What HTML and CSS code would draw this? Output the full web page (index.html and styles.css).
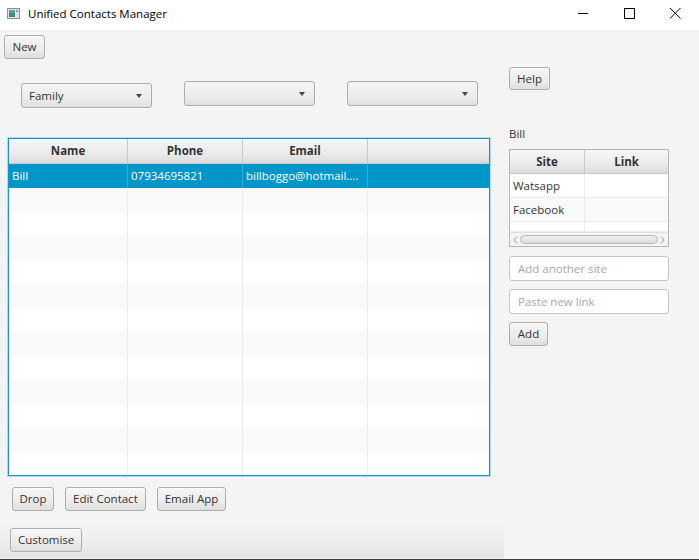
FILE: index.html
```html
<!DOCTYPE html>
<html>
<head>
<meta charset="utf-8">
<title>Unified Contacts Manager</title>
<link rel="stylesheet" href="styles.css">
</head>
<body>
<div class="window">
  <div class="titlebar">
    <svg class="app-icon" width="13" height="11" viewBox="0 0 13 11">
      <rect x="0.5" y="0.5" width="12" height="10" fill="#dfe3e6" stroke="#8a9199"/>
      <rect x="2" y="2" width="6" height="7" fill="#3f8f7f"/>
      <rect x="2" y="2" width="6" height="3" fill="#5aa595"/>
      <rect x="9" y="2" width="2" height="2" fill="#7c98b0"/>
    </svg>
    <span class="title">Unified Contacts Manager</span>
    <div class="controls">
      <svg class="ctl" width="46" height="30" viewBox="0 0 46 30"><line x1="18" y1="13.5" x2="28" y2="13.5" stroke="#000" stroke-width="1"/></svg>
      <svg class="ctl" width="46" height="30" viewBox="0 0 46 30"><rect x="18.5" y="8.5" width="10" height="10" fill="none" stroke="#000" stroke-width="1"/></svg>
      <svg class="ctl" width="46" height="30" viewBox="0 0 46 30"><path d="M18 8 L28.5 18.5 M28.5 8 L18 18.5" stroke="#000" stroke-width="1"/></svg>
    </div>
  </div>

  <div class="content">
    <div class="top-bar">
      <button class="btn btn-new">New</button>
    </div>
    <div class="main">
      <div class="left">
        <div class="combos">
          <div class="combo combo-first"><span class="combo-text">Family</span><span class="arrow"></span></div>
          <div class="combo"><span class="combo-text"></span><span class="arrow"></span></div>
          <div class="combo"><span class="combo-text"></span><span class="arrow"></span></div>
        </div>

        <div class="table contacts focused">
          <div class="thead">
            <div class="th">Name</div>
            <div class="th">Phone</div>
            <div class="th">Email</div>
            <div class="th"></div>
          </div>
          <div class="tbody">
            <div class="tr selected"><div class="td">Bill</div><div class="td">07934695821</div><div class="td">billboggo@hotmail....</div><div class="td"></div></div>
            <div class="tr odd"><div class="td"></div><div class="td"></div><div class="td"></div><div class="td"></div></div>
            <div class="tr"><div class="td"></div><div class="td"></div><div class="td"></div><div class="td"></div></div>
            <div class="tr odd"><div class="td"></div><div class="td"></div><div class="td"></div><div class="td"></div></div>
            <div class="tr"><div class="td"></div><div class="td"></div><div class="td"></div><div class="td"></div></div>
            <div class="tr odd"><div class="td"></div><div class="td"></div><div class="td"></div><div class="td"></div></div>
            <div class="tr"><div class="td"></div><div class="td"></div><div class="td"></div><div class="td"></div></div>
            <div class="tr odd"><div class="td"></div><div class="td"></div><div class="td"></div><div class="td"></div></div>
            <div class="tr"><div class="td"></div><div class="td"></div><div class="td"></div><div class="td"></div></div>
            <div class="tr odd"><div class="td"></div><div class="td"></div><div class="td"></div><div class="td"></div></div>
            <div class="tr"><div class="td"></div><div class="td"></div><div class="td"></div><div class="td"></div></div>
            <div class="tr odd"><div class="td"></div><div class="td"></div><div class="td"></div><div class="td"></div></div>
            <div class="tr"><div class="td"></div><div class="td"></div><div class="td"></div><div class="td"></div></div>
          </div>
        </div>

        <div class="actions">
          <button class="btn btn-drop">Drop</button>
          <button class="btn">Edit Contact</button>
          <button class="btn">Email App</button>
        </div>

        <div class="toolbar">
          <button class="btn">Customise</button>
        </div>
      </div>

      <div class="right">
        <button class="btn btn-help">Help</button>
        <div class="person">Bill</div>
        <div class="table sites">
          <div class="thead">
            <div class="th">Site</div>
            <div class="th">Link</div>
          </div>
          <div class="tbody">
            <div class="tr"><div class="td">Watsapp</div><div class="td"></div></div>
            <div class="tr odd"><div class="td">Facebook</div><div class="td"></div></div>
            <div class="tr short"><div class="td"></div><div class="td"></div></div>
          </div>
          <div class="hscroll">
            <svg class="sarrow" width="9" height="12" viewBox="0 0 9 12"><path d="M6 2.5 L3 6 L6 9.5" fill="none" stroke="#9a9a9a" stroke-width="1"/></svg>
            <div class="thumb"></div>
            <svg class="sarrow" width="9" height="12" viewBox="0 0 9 12"><path d="M3 2.5 L6 6 L3 9.5" fill="none" stroke="#9a9a9a" stroke-width="1"/></svg>
          </div>
        </div>
        <div class="field"><span class="prompt">Add another site</span></div>
        <div class="field"><span class="prompt">Paste new link</span></div>
        <button class="btn btn-add">Add</button>
      </div>
    </div>
  </div>
</div>
</body>
</html>
```

FILE: styles.css
```css
* { box-sizing: border-box; }

html, body {
  margin: 0;
  padding: 0;
  width: 699px;
  height: 560px;
  overflow: hidden;
  background: #f4f4f4;
  font-family: "Open Sans", "Noto Sans", sans-serif;
  font-size: 11.5px;
  color: #333;
}

.window {
  width: 699px;
  height: 560px;
  display: flex;
  flex-direction: column;
  border-bottom: 1px solid #3a3a3a;
}

/* ---------- title bar ---------- */
.titlebar {
  height: 30px;
  background: #fff;
  display: flex;
  align-items: center;
  flex: none;
}
.app-icon { margin-left: 7px; margin-top: -3px; }
.title {
  margin-left: 8px;
  margin-top: -3px;
  color: #000;
  font-size: 11.5px;
}
.controls {
  margin-left: auto;
  display: flex;
  align-self: flex-start;
  margin-right: 1px;
}
.ctl { display: block; }

/* ---------- content ---------- */
.content {
  flex: 1;
  background: #f4f4f4;
  display: flex;
  flex-direction: column;
}
.top-bar {
  padding: 5px 0 0 4px;
  height: 29px;
}

.btn {
  font-family: inherit;
  font-size: 11.5px;
  color: #333;
  height: 24px;
  padding: 0 7px;
  border: 1px solid #adadad;
  border-radius: 3px;
  background: linear-gradient(#f6f6f6 0%, #ececec 60%, #dedede 100%);
  box-shadow: inset 0 1px 0 rgba(255,255,255,0.8);
  line-height: 20px;
  cursor: default;
}
.btn-new { width: 41px; }
.btn-drop { width: 42px; padding: 0; }

.main {
  flex: 1;
  display: flex;
}

.left {
  width: 504px;
  display: flex;
  flex-direction: column;
}

.combos {
  display: flex;
  padding-left: 21px;
  margin-top: 22px;
  gap: 32px;
  align-items: flex-start;
}
.combo {
  width: 131px;
  height: 25px;
  border: 1px solid #adadad;
  border-radius: 3px;
  background: linear-gradient(#f4f4f4 0%, #ececec 60%, #e0e0e0 100%);
  display: flex;
  align-items: center;
  padding: 0 9px 0 7px;
}
.combo-first { margin-top: 2px; }
.combo-text { flex: 1; color: #333; }
.arrow {
  width: 0;
  height: 0;
  border-left: 3.5px solid transparent;
  border-right: 3.5px solid transparent;
  border-top: 4px solid #444;
}

/* ---------- tables ---------- */
.table {
  background: #fff;
  border: 1px solid #b5b5b5;
  overflow: hidden;
}
.thead {
  display: grid;
  height: 25px;
  background: linear-gradient(#f5f5f5 0%, #ececec 55%, #dcdcdc 100%);
  border-bottom: 1px solid #c8c8c8;
}
.th {
  font-weight: bold;
  text-align: center;
  line-height: 23px;
  border-right: 1px solid #c8c8c8;
  color: #333;
}
.tr {
  display: grid;
  height: 24px;
  background: #fff;
}
.tr.odd { background: #f9f9f9; }
.td {
  border-right: 1px solid #ececec;
  line-height: 23px;
  padding-left: 3px;
  white-space: nowrap;
  overflow: hidden;
  color: #333;
}
.tr.selected { background: #0096c9; }
.tr.selected .td { color: #fff; border-right-color: #3aaad6; }

.contacts {
  margin: 30px 0 0 8px;
  width: 482px;
  height: 338px;
}
.contacts.focused {
  border: 1px solid #1296c8;
  box-shadow: 0 0 0 1px rgba(120, 196, 226, 0.55);
}
.contacts .thead, .contacts .tr {
  grid-template-columns: 119px 115px 125px 1fr;
}
.contacts .th:last-child { border-right: none; }
.contacts .td:last-child { border-right: none; }

.actions {
  display: flex;
  gap: 11px;
  padding-left: 12px;
  margin-top: 11px;
}

.toolbar {
  margin-top: 11px;
  height: 36px;
  padding: 6px 0 0 10px;
  background: linear-gradient(#f4f4f4 0%, #ececec 60%, #e4e4e4 100%);
}

/* ---------- right column ---------- */
.right {
  margin-left: 5px;
  width: 160px;
  display: flex;
  flex-direction: column;
  align-items: flex-start;
}
.btn-help { margin-top: 8px; width: 41px; height: 23px; }
.person {
  margin-top: 36px;
  height: 23px;
  color: #333;
  line-height: 16px;
}
.sites {
  width: 160px;
  height: 98px;
  display: flex;
  flex-direction: column;
}
.sites .thead, .sites .tr {
  grid-template-columns: 75px 1fr;
}
.sites .th:last-child, .sites .td:last-child { border-right: none; }
.sites .td { border-bottom: 1px solid #ececec; }
.sites .tr { height: 24px; }
.sites .tr.short { height: 10px; }
.hscroll {
  height: 14px;
  display: flex;
  align-items: center;
  background: #f4f4f4;
  border-top: 1px solid #e0e0e0;
  padding: 0 1px;
}
.thumb {
  flex: 1;
  height: 9px;
  border: 1px solid #b8b8b8;
  border-radius: 5px;
  background: linear-gradient(#f0f0f0, #dcdcdc);
}

.field {
  margin-top: 9px;
  width: 160px;
  height: 25px;
  background: #fff;
  border: 1px solid #c4c4c4;
  border-radius: 3px;
  padding-left: 8px;
  line-height: 23px;
}
.field + .field { margin-top: 8px; }
.prompt { color: #a8a8a8; }
.btn-add { margin-top: 8px; width: 39px; }
```
